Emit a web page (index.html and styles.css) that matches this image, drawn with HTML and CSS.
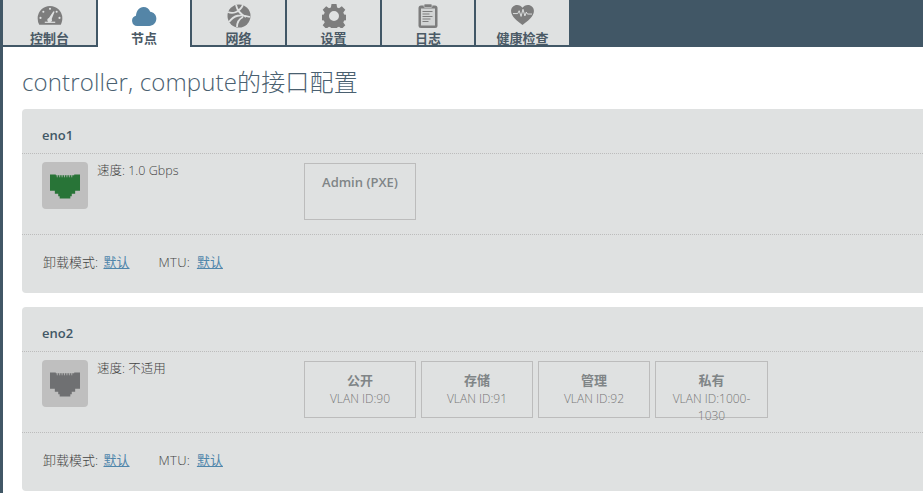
FILE: index.html
```html
<!DOCTYPE html>
<html lang="zh">
<head>
<meta charset="utf-8">
<title>节点</title>
<link rel="stylesheet" href="styles.css">
</head>
<body>
<nav class="tabs">
  <a class="tab t1"><svg class="ico" viewBox="0 0 26 20"><path fill="#7d7d7d" d="M13 0a13 13 0 0 1 13 13c0 2.500-.6 4.700-1.700 6.700H1.700A13 13 0 0 1 0 13 13 13 0 0 1 13 0z"/><g fill="#dfe1e1"><circle cx="13" cy="3" r="1.100"/><circle cx="6" cy="6" r="1.100"/><circle cx="20" cy="6" r="1.100"/><circle cx="3" cy="12.500" r="1.100"/><circle cx="23" cy="12.500" r="1.100"/><path d="M16.600 5.500l1.200.6-3 7.600a2.400 2.400 0 1 1-3-1.200z"/><rect x="7.500" y="16.500" width="11" height="1.300"/></g></svg><span>控制台</span></a>
  <a class="tab t2 active"><svg class="ico" viewBox="0 0 26 20"><path fill="#5485a7" d="M6 20a5.500 5.500 0 0 1-1.500-10.800C5 4 8 0 12.500 0c3.300 0 6 2 7 5 3.500.3 6.500 3.300 6.500 7.200 0 4.300-3.300 7.800-7.500 7.800z"/></svg><span>节点</span></a>
  <a class="tab t3"><svg class="ico" viewBox="0 0 24 24"><circle cx="12" cy="12" r="11.500" fill="#7d7d7d"/><path fill="none" stroke="#dfe1e1" stroke-width="1.800" d="M1 8c4 2 11 1 15-7M2 18c5-7 11-8 21-5M9 1c1 5 4 9 10 12M10 23c0-4 2-8 6-10"/></svg><span>网络</span></a>
  <a class="tab t4"><svg class="ico" viewBox="0 0 24 24"><path fill="#7d7d7d" fill-rule="evenodd" d="M9.500 0h5l.6 3.400 1.900.8 2.800-2 3.500 3.500-2 2.800.8 1.900 3.400.6v5l-3.400.6-.8 1.900 2 2.800-3.500 3.500-2.800-2-1.900.8-.6 3.400h-5l-.6-3.400-1.900-.8-2.800 2-3.500-3.500 2-2.800-.8-1.900-3.400-.6v-5l3.400-.6.8-1.900-2-2.800 3.500-3.500 2.800 2 1.900-.8zM12 7a5 5 0 1 0 0 10 5 5 0 0 0 0-10z"/></svg><span>设置</span></a>
  <a class="tab t5"><svg class="ico" viewBox="0 0 20 24"><rect x="0.500" y="1.500" width="19" height="22.500" rx="2.500" fill="#7d7d7d"/><rect x="6" y="0" width="8" height="3.500" rx="1" fill="#7d7d7d" stroke="#dfe1e1" stroke-width=".6"/><rect x="3" y="4.500" width="14" height="17" fill="#d2d4d4"/><path stroke="#7d7d7d" stroke-width="1.200" d="M4.500 7.500h10M4.500 10h7M4.500 12.500h10M4.500 15h8M4.500 17.500h6"/></svg><span>日志</span></a>
  <a class="tab t6"><svg class="ico" viewBox="0 0 24 21"><path fill="#7d7d7d" d="M12 21C7 17 0 12 0 6.200 0 2.500 3 0 6.300 0 8.800 0 10.800 1.200 12 3c1.200-1.800 3.200-3 5.700-3C21 0 24 2.500 24 6.200 24 12 17 17 12 21z"/><path fill="none" stroke="#dfe1e1" stroke-width="1" d="M2 9h5l1.500-3 2 6 2-7.500 2 7 1.500-4 1.200 2H22"/></svg><span>健康检查</span></a>
</nav>
<main class="content">
  <h1 class="title">controller, compute的接口配置</h1>

  <section class="panel">
    <h2 class="name">eno1</h2>
    <div class="body">
      <div class="port port-up"><svg viewBox="0 0 31 25"><path fill="currentColor" d="M0 0h6v1h19V0h6v17h-5v3h-3.500v2.500h-1.500V25H10v-2.500H8.500V20H5v-3H0z"/><path stroke="#bfbfbf" stroke-width=".8" d="M7.500 0v3M10 0v3M12.500 0v3M15 0v3M17.500 0v3M20 0v3M22.500 0v3"/></svg></div>
      <div class="speed">速度: 1.0 Gbps</div>
      <div class="nets">
        <div class="net"><b>Admin (PXE)</b></div>
      </div>
    </div>
    <div class="foot">卸载模式: <a class="val">默认</a><span class="mtu">MTU: <a class="val">默认</a></span></div>
  </section>

  <section class="panel">
    <h2 class="name">eno2</h2>
    <div class="body">
      <div class="port port-down"><svg viewBox="0 0 31 25"><path fill="currentColor" d="M0 0h6v1h19V0h6v17h-5v3h-3.500v2.500h-1.500V25H10v-2.500H8.500V20H5v-3H0z"/><path stroke="#bfbfbf" stroke-width=".8" d="M7.500 0v3M10 0v3M12.500 0v3M15 0v3M17.500 0v3M20 0v3M22.500 0v3"/></svg></div>
      <div class="speed">速度: 不适用</div>
      <div class="nets">
        <div class="net"><b>公开</b><span>VLAN ID:90</span></div>
        <div class="net"><b>存储</b><span>VLAN ID:91</span></div>
        <div class="net"><b>管理</b><span>VLAN ID:92</span></div>
        <div class="net net-wide"><b>私有</b><span>VLAN ID:1000-1030</span></div>
      </div>
    </div>
    <div class="foot">卸载模式: <a class="val">默认</a><span class="mtu">MTU: <a class="val">默认</a></span></div>
  </section>
</main>
</body>
</html>
```
FILE: styles.css
```css
* { box-sizing: border-box; }
html, body { margin: 0; height: 100%; overflow: hidden; }
body {
  background: #fff;
  border-left: 3px solid #415766;
  font-family: "Open Sans", "Noto Sans CJK SC", sans-serif;
  font-size: 12px;
  color: #555;
}
.tabs {
  display: flex;
  gap: 2px;
  height: 47px;
  background: #415766;
}
.tab {
  width: 93px;
  height: 45px;
  background: #dfe1e1;
  display: flex;
  flex-direction: column;
  align-items: center;
  color: #4b5a66;
  font-weight: 700;
  font-size: 13px;
  line-height: 16px;
}
.tab span { margin-top: 4px; }
.t2, .t5 { width: 92px; }
.ico { width: 26px; height: 19px; margin-top: 6px; margin-bottom: 1px; flex: none; }
.t2 .ico { margin-top: 7px; margin-bottom: 0; }
.t3 .ico, .t4 .ico { width: 24px; height: 24px; margin-top: 4px; margin-bottom: -2px; }
.t5 .ico { width: 20px; height: 24px; margin-top: 4px; margin-bottom: -2px; }
.t6 .ico { width: 23px; height: 20px; margin-top: 5px; margin-bottom: 1px; }
.active {
  height: 47px;
  background: #fff;
}
.content { padding: 0 0 0 19px; }
.title {
  margin: 0;
  padding-top: 19px;
  height: 62px;
  font-size: 24px;
  letter-spacing: .15px;
  line-height: 32px;
  font-weight: 300;
  color: #4a6070;
}
.panel {
  background: #dfe1e1;
  border-radius: 4px 0 0 4px;
  height: 184px;
  margin-bottom: 14px;
}
.name {
  margin: 0;
  height: 45px;
  padding: 18px 20px 0;
  font-size: 13px;
  line-height: 16px;
  font-weight: 600;
  color: #415766;
  border-bottom: 1px dotted #bcbcbc;
}
.body {
  height: 81px;
  display: flex;
  padding: 8px 0 0 20px;
  border-bottom: 1px dotted #bcbcbc;
}
.port {
  width: 46px;
  height: 47px;
  background: #bfbfbf;
  border-radius: 4px;
  display: flex;
  justify-content: center;
  padding-top: 12px;
  flex: none;
}
.port svg { width: 30px; height: 25px; }
.port-up { color: #287437; }
.port-down { color: #6f7072; }
.speed { width: 216px; padding: 0 0 0 9px; line-height: 18px; flex: none; font-size: 12.5px; font-weight: 300; color: #444; }
.nets { display: flex; gap: 5px; padding-top: 1px; }
.net {
  width: 112px;
  height: 57px;
  border: 1px solid #bcbcbc;
  text-align: center;
  padding: 10px 8px 0;
  color: #777;
  line-height: 17px;
  display: flex;
  flex-direction: column;
  align-items: center;
  font-weight: 300;
}
.net b { font-weight: 600; font-size: 13px; color: #808587; }
.net span { margin-top: 1px; }
.net-wide { width: 113px; }
.foot {
  padding: 18px 0 0 21px;
  line-height: 18px;
  font-size: 13px;
  font-weight: 300;
  color: #444;
}
.val { color: #4f86ab; text-decoration: underline; margin-left: 2px; font-weight: 400; }
.mtu { margin-left: 29px; letter-spacing: .3px; }
.mtu .val { margin-left: 3px; letter-spacing: 0; }
```
